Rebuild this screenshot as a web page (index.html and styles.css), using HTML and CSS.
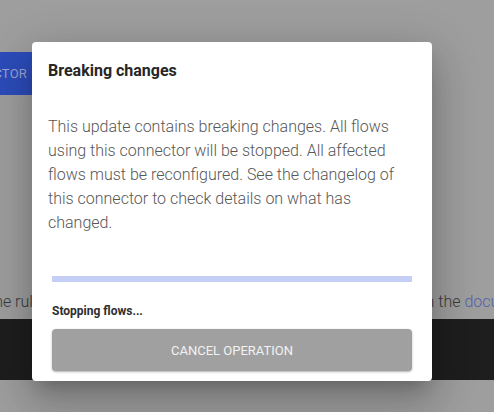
FILE: index.html
```html
<!DOCTYPE html>
<html lang="en">
<head>
<meta charset="utf-8">
<title>Breaking changes</title>
<link rel="stylesheet" href="styles.css">
</head>
<body>
  <div class="page">
    <div class="toolbar">
      <button class="primary-btn">Add connector</button>
    </div>
    <div class="info-line">
      <span class="info-left">the rules</span>
      <span class="info-right">in the <a class="link">documentation</a></span>
    </div>
    <div class="footer-band"></div>
  </div>

  <div class="dialog" role="dialog">
    <h2 class="dialog-title">Breaking changes</h2>
    <p class="dialog-body">This update contains breaking changes. All flows using this connector will be stopped. All affected flows must be reconfigured. See the changelog of this connector to check details on what has changed.</p>
    <div class="dialog-progress">
      <div class="progress-track"></div>
      <div class="progress-label">Stopping flows...</div>
      <button class="cancel-btn">Cancel operation</button>
    </div>
  </div>
</body>
</html>
```
FILE: styles.css
```css
html, body {
  margin: 0;
  padding: 0;
}
body {
  background: #9e9e9e;
  font-family: Roboto, "Liberation Sans", sans-serif;
  width: 494px;
  height: 412px;
  overflow: hidden;
  position: relative;
}
.page {
  padding-top: 52px;
}
.toolbar {
  height: 43px;
}
.primary-btn {
  display: block;
  margin-left: -113px;
  width: 160px;
  height: 43px;
  padding: 0 20px 0 0;
  border: none;
  background: #2c4cba;
  color: #9ba4d0;
  font-family: Roboto, "Liberation Sans", sans-serif;
  font-size: 13px;
  font-weight: 400;
  letter-spacing: 0.2px;
  text-transform: uppercase;
  text-align: right;
}
.info-line {
  margin-top: 195px;
  height: 24px;
  line-height: 24px;
  font-size: 16px;
  font-weight: 300;
  color: #3a3a3a;
  display: grid;
  grid-template-columns: 422px 1fr;
  white-space: nowrap;
  overflow: hidden;
}
.info-left {
  margin-left: -11px;
  width: 44px;
  overflow: hidden;
}
.link {
  color: #5262b0;
}
.footer-band {
  margin-top: 5px;
  height: 61px;
  background: #1e1e1e;
}
.dialog {
  position: absolute;
  left: 32px;
  top: 42px;
  width: 400px;
  height: 339px;
  box-sizing: border-box;
  background: #fff;
  border-radius: 4px;
  box-shadow: 0 11px 15px -7px rgba(0,0,0,.2), 0 24px 38px 3px rgba(0,0,0,.14), 0 9px 46px 8px rgba(0,0,0,.12);
  display: flex;
  flex-direction: column;
}
.dialog-title {
  margin: 0;
  padding: 17px 16px 0;
  font-size: 16px;
  line-height: 24px;
  font-weight: 700;
  color: #262626;
}
.dialog-body {
  margin: 32px 0 0;
  padding: 0 16px;
  font-size: 16px;
  line-height: 24px;
  font-weight: 300;
  color: #575757;
}
.dialog-progress {
  margin-top: 41px;
  padding: 0 20px;
  display: flex;
  flex-direction: column;
}
.progress-track {
  height: 6px;
  background: #c5cef5;
}
.progress-label {
  margin-top: 21px;
  font-size: 12px;
  line-height: 16px;
  font-weight: 700;
  color: #2e2e2e;
}
.cancel-btn {
  margin-top: 10px;
  height: 42px;
  border: none;
  border-radius: 4px;
  background: #a0a0a0;
  color: #f2f2f2;
  font-family: Roboto, "Liberation Sans", sans-serif;
  font-size: 13px;
  font-weight: 400;
  text-transform: uppercase;
  box-shadow: 0 1px 3px rgba(0,0,0,.2), 0 1px 1px rgba(0,0,0,.12);
}
```
